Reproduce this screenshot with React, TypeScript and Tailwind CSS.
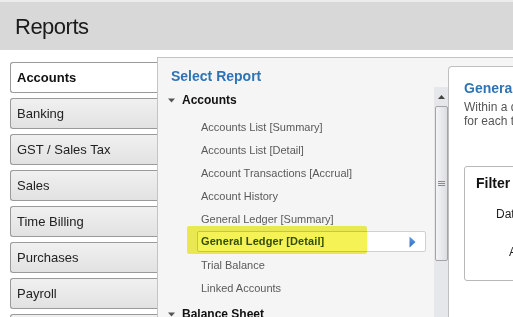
import React from "react";

const tabs = ["Accounts", "Banking", "GST / Sales Tax", "Sales", "Time Billing", "Purchases", "Payroll", "Inventory"];
const items = [
  "Accounts List [Summary]",
  "Accounts List [Detail]",
  "Account Transactions [Accrual]",
  "Account History",
  "General Ledger [Summary]",
  "General Ledger [Detail]",
  "Trial Balance",
  "Linked Accounts",
];

function Caret() {
  return (
    <svg width="7" height="5" viewBox="0 0 7 5" className="shrink-0">
      <path d="M0 0.5 L7 0.5 L3.5 4.5 Z" fill="#555" />
    </svg>
  );
}

export default function App() {
  return (
    <div
      className="w-[513px] h-[317px] overflow-hidden bg-white relative"
      style={{ fontFamily: '"Liberation Sans", Arial, sans-serif' }}
    >
      {/* header */}
      <div className="h-[50px] bg-[#d8d8d8] border-t-[2px] border-[#ececec] flex items-center pl-[15px]">
        <span className="text-[22px] text-[#1a1a1a] tracking-[-0.5px] leading-none mt-[2px]">Reports</span>
      </div>

      <div className="flex">
        {/* tabs */}
        <div className="w-[147px] ml-[10px] pt-[12px] flex flex-col gap-[5px] shrink-0">
          {tabs.map((t, i) =>
            i === 0 ? (
              <div
                key={t}
                className="h-[31px] bg-white border border-r-0 border-[#9a9a9a] rounded-l-[3px] flex items-center pl-[6px] text-[13px] font-bold text-[#111]"
              >
                {t}
              </div>
            ) : (
              <div
                key={t}
                className="h-[31px] bg-gradient-to-b from-[#f0f0f0] to-[#e2e2e2] border border-r-0 border-[#9a9a9a] rounded-l-[3px] flex items-center pl-[6px] text-[13px] text-[#222]"
              >
                {t}
              </div>
            )
          )}
        </div>

        {/* middle + right */}
        <div className="mt-[7px] flex-1 bg-[#f5f5f5] border-l border-t border-[#c4c4c4] flex h-[260px]">
          {/* list column */}
          <div className="w-[290px] shrink-0 flex flex-col pt-[8px]">
            <div className="h-[22px] flex items-center pl-[13px] text-[14px] font-bold text-[#2e74b5]">
              Select Report
            </div>
            <div className="flex flex-1">
              <div className="flex-1 flex flex-col relative">
                <div className="h-[24px] mt-[1px] flex items-center pl-[10px] gap-[7px] text-[12px] font-bold text-[#111]">
                  <Caret />
                  <span>Accounts</span>
                </div>
                <div className="mt-[4px] flex flex-col">
                  {items.map((it, i) =>
                    i === 5 ? (
                      <div key={it} className="h-[23px] pl-[39px] pr-[7px]">
                        <div className="h-[21px] bg-white border border-[#d0d0d0] rounded-[2px] flex items-center justify-between pl-[3px] pr-[9px]">
                          <span className="text-[11px] font-bold text-[#34520f] tracking-[0.1px]">{it}</span>
                          <svg width="7" height="12" viewBox="0 0 7 12">
                            <defs>
                              <linearGradient id="ag" x1="0" y1="0" x2="0" y2="1">
                                <stop offset="0" stopColor="#5b9bea" />
                                <stop offset="1" stopColor="#2f6cc4" />
                              </linearGradient>
                            </defs>
                            <path d="M0.5 0.5 L6.5 6 L0.5 11.5 Z" fill="url(#ag)" />
                          </svg>
                        </div>
                      </div>
                    ) : (
                      <div key={it} className="h-[23px] flex items-center pl-[43px] text-[11px] text-[#5a5a5a]">
                        {it}
                      </div>
                    )
                  )}
                </div>
                <div className="h-[24px] mt-[2px] flex items-center pl-[10px] gap-[7px] text-[12px] font-bold text-[#111]">
                  <Caret />
                  <span>Balance Sheet</span>
                </div>
                {/* highlighter mark */}
                <div className="absolute left-[29px] top-[139px] w-[180px] h-[28px] bg-[#f2ef2a] opacity-80 mix-blend-multiply rounded-[2px] pointer-events-none" />
              </div>
              {/* scrollbar */}
              <div className="w-[15px] shrink-0 bg-[#e6e7ea] border-l border-[#f4f4f4] flex flex-col items-center">
                <div className="h-[19px] flex items-center justify-center">
                  <svg width="7" height="4" viewBox="0 0 7 4">
                    <path d="M0 4 L3.5 0 L7 4 Z" fill="#444" />
                  </svg>
                </div>
                <div className="w-[13px] h-[155px] rounded-[2px] border border-[#a4a4a4] bg-gradient-to-r from-[#f3f4f6] to-[#dcdee2] flex flex-col items-center justify-center gap-[1px]">
                  <div className="w-[7px] h-[1px] bg-[#8a8a8a]" />
                  <div className="w-[7px] h-[1px] bg-[#8a8a8a]" />
                  <div className="w-[7px] h-[1px] bg-[#8a8a8a]" />
                </div>
              </div>
            </div>
          </div>

          {/* right panel */}
          <div className="flex-1 mt-[8px] bg-white border-l border-t border-[#c0c0c0] rounded-tl-[4px] overflow-hidden pl-[15px] pt-[12px] whitespace-nowrap">
            <div className="text-[14px] font-bold text-[#2e74b5] leading-[18px]">General Ledger [Detail]</div>
            <div className="text-[12px] text-[#555] leading-[14px] mt-[3px]">Within a date range, displays</div>
            <div className="text-[12px] text-[#555] leading-[14px]">for each transaction</div>
            <div className="mt-[38px] h-[115px] border border-[#b8b8b8] rounded-[3px] pl-[11px] pt-[7px] text-[#222]">
              <div className="text-[14px] font-bold leading-[18px] text-[#111]">Filter</div>
              <div className="text-[12px] pl-[20px] mt-[13px]">Dates</div>
              <div className="text-[12px] pl-[33px] mt-[20px]">Accounts</div>
            </div>
          </div>
        </div>
      </div>
    </div>
  );
}
